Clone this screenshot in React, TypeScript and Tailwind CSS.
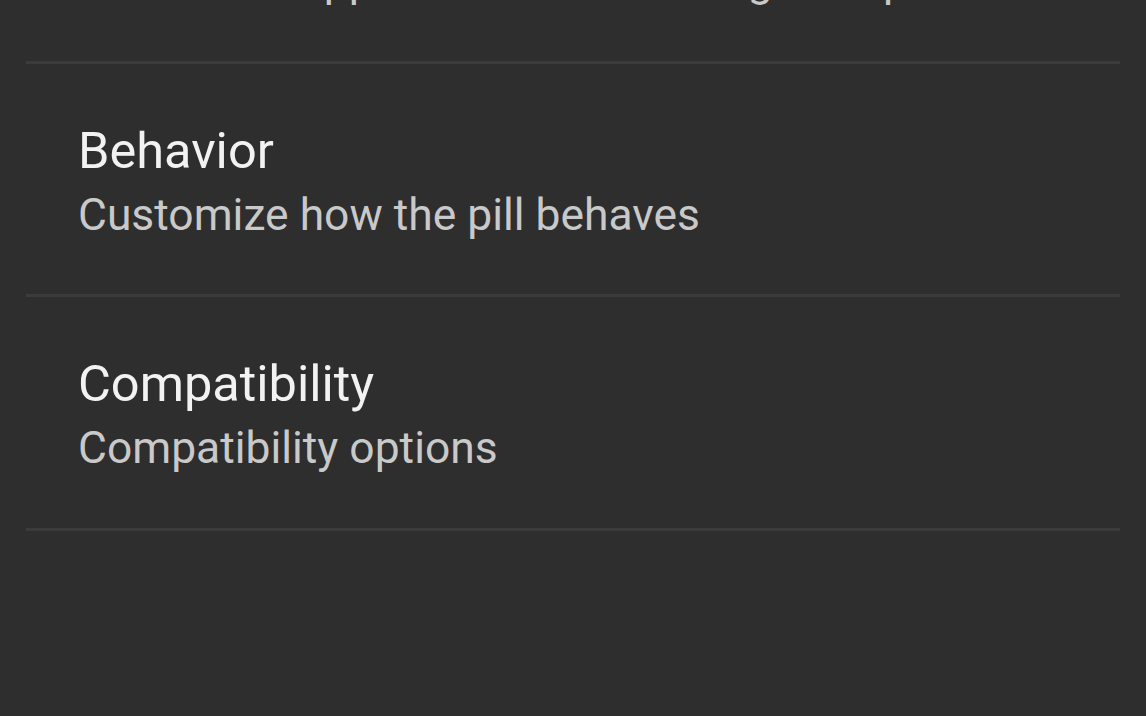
const items = [
  { title: 'Appearance', subtitle: 'Customize appearance of the navigation pill' },
  { title: 'Behavior', subtitle: 'Customize how the pill behaves' },
  { title: 'Compatibility', subtitle: 'Compatibility options' },
];

export default function App() {
  return (
    <div className="h-[716px] w-full overflow-hidden bg-[#2e2e2e] font-['Roboto',sans-serif]">
      {/* list is scrolled, the first item is partly off the top */}
      <div className="-mt-[170px]">
        {items.map((item) => (
          <div key={item.title} className="mx-[26px] border-b-[3px] border-[#3b3b3b]">
            <div className="flex h-[230.5px] flex-col px-[52px] pt-[57px]">
              <div className="text-[50.5px] leading-[60px] text-[#f2f2f2]">{item.title}</div>
              <div className="mt-[9px] text-[44.4px] leading-[50px] text-[#c9c9c9]">{item.subtitle}</div>
            </div>
          </div>
        ))}
      </div>
    </div>
  );
}
